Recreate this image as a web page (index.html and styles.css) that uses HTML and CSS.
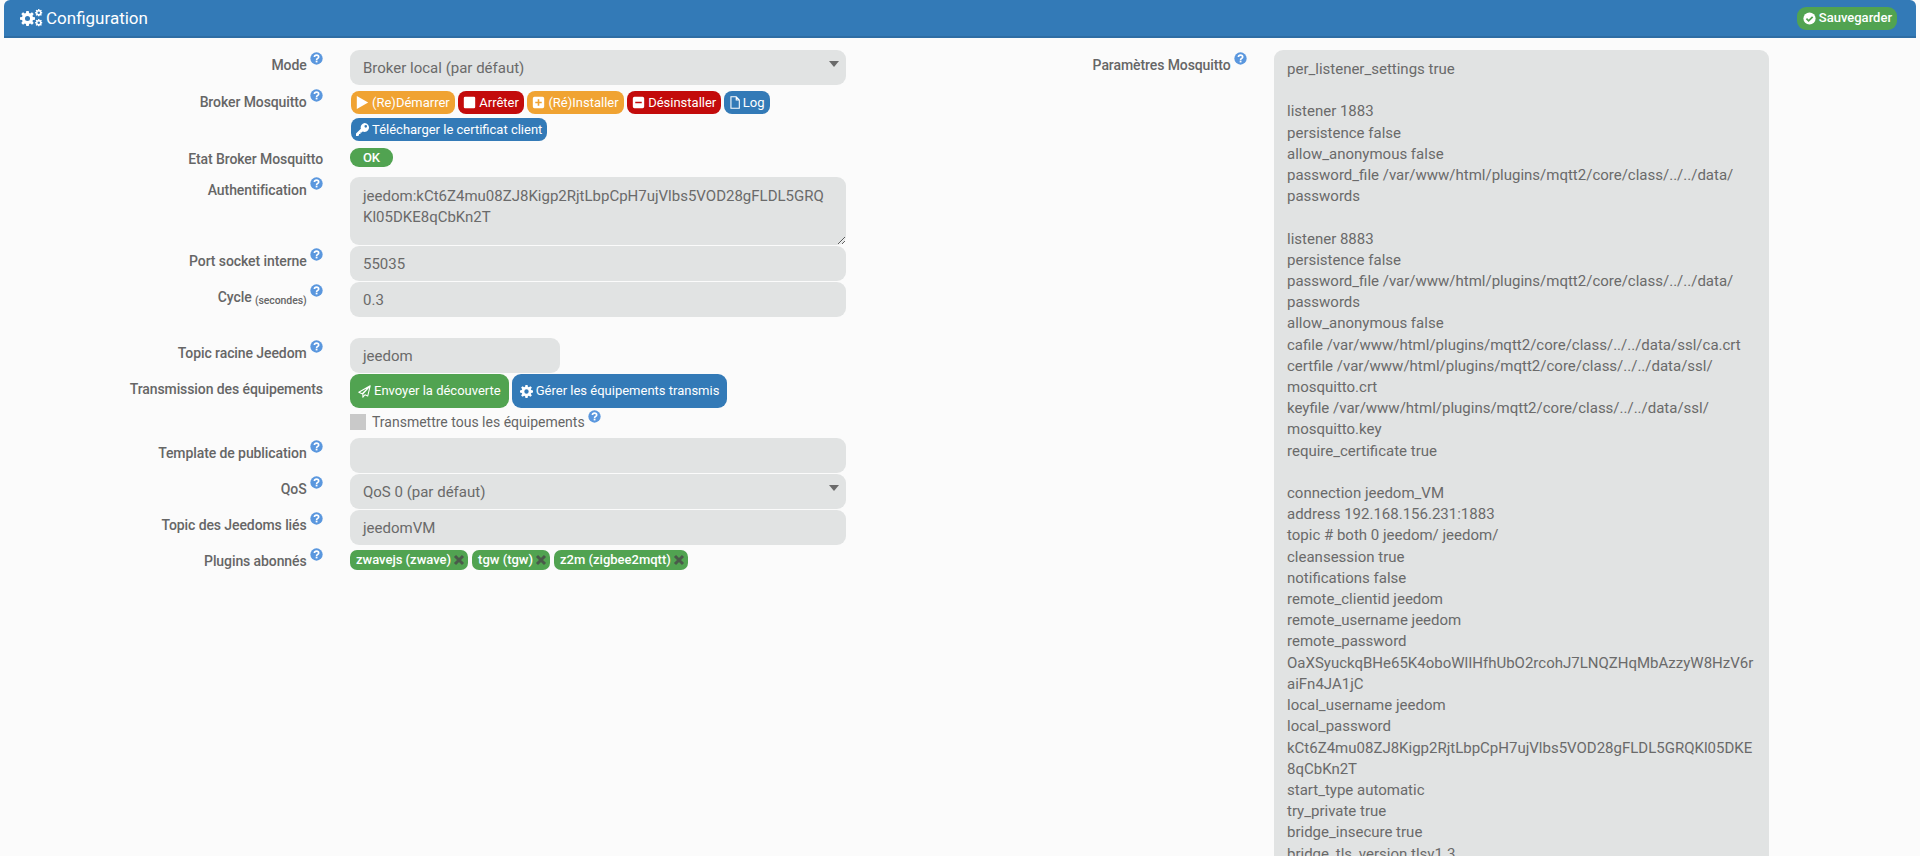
FILE: index.html
```html
<!DOCTYPE html>
<html lang="fr">
<head>
<meta charset="utf-8">
<title>Configuration</title>
<link rel="stylesheet" href="styles.css">
</head>
<body>
<svg class="defs" width="0" height="0" aria-hidden="true">
  <symbol id="q" viewBox="0 0 16 16"><circle cx="8" cy="8" r="7.6" fill="#5a97de"/><path d="M5.400 6.200C5.500 4.600 6.600 3.800 8 3.800c1.500 0 2.700.9 2.700 2.200 0 1.900-2.600 1.900-2.600 3.700" fill="none" stroke="#fff" stroke-width="2"/><rect x="7" y="10.600" width="2.200" height="2.200" fill="#fff"/></symbol>
  <symbol id="cog" viewBox="0 0 16 16"><path fill-rule="evenodd" d="M6.700 0h2.600l.4 2.200 1.200.5L12.800 1.400l1.800 1.800-1.300 1.900.5 1.200 2.200.4v2.600l-2.200.4-.5 1.200 1.300 1.900-1.800 1.800-1.900-1.300-1.200.5-.4 2.200H6.700l-.4-2.200-1.200-.5-1.900 1.300-1.800-1.800 1.300-1.900-.5-1.200L0 9.300V6.700l2.200-.4.5-1.200-1.300-1.900 1.800-1.800 1.900 1.300 1.200-.5zM8 5.300a2.700 2.700 0 1 0 0 5.400 2.700 2.700 0 0 0 0-5.400z"/></symbol>
  <symbol id="check" viewBox="0 0 16 16"><circle cx="8" cy="8" r="7.5"/><path d="M4.200 8.200l2.700 2.700 5-5" fill="none" stroke="#51a351" stroke-width="2.200"/></symbol>
  <symbol id="play" viewBox="0 0 16 16"><path d="M1 0l14 8-14 8z"/></symbol>
  <symbol id="stop" viewBox="0 0 16 16"><rect x="1" y="1" width="14" height="14" rx="1.500"/></symbol>
  <symbol id="plus" viewBox="0 0 16 16"><path fill-rule="evenodd" d="M3 1h10a2 2 0 0 1 2 2v10a2 2 0 0 1-2 2H3a2 2 0 0 1-2-2V3a2 2 0 0 1 2-2zm4 3v3H4v2h3v3h2V9h3V7H9V4z"/></symbol>
  <symbol id="minus" viewBox="0 0 16 16"><path fill-rule="evenodd" d="M3 1h10a2 2 0 0 1 2 2v10a2 2 0 0 1-2 2H3a2 2 0 0 1-2-2V3a2 2 0 0 1 2-2zm1 6v2h8V7z"/></symbol>
  <symbol id="file" viewBox="2 0 12 16"><path d="M3 1h6.500L13.300 5v10H3zM9.500 1v4h3.800" fill="none" stroke="currentColor" stroke-width="1.300"/></symbol>
  <symbol id="key" viewBox="0 0 16 16"><path fill-rule="evenodd" d="M10.500 0a5.500 5.500 0 1 1-2.300 10.500L7 11.700H5.500v1.800H3.700V15L2.500 16H0v-3l6-6A5.500 5.500 0 0 1 10.500 0zm1.500 2.500a1.600 1.600 0 1 0 0 3.200 1.600 1.600 0 0 0 0-3.200z"/></symbol>
  <symbol id="plane" viewBox="0 0 16 16"><path d="M15 1L1 9l4 1.800L15 1zM15 1l-9 10v4l2.600-3 3.400 1.500z" fill="none" stroke="currentColor" stroke-width="1.300" stroke-linejoin="round"/></symbol>
  <symbol id="times" viewBox="0 0 12 12"><path d="M2 2l8 8M10 2l-8 8" stroke="#4a5a4a" stroke-width="3" fill="none"/></symbol>
</svg>

<main class="panel">
  <header class="head">
    <h1 class="title">
      <svg class="cogs" viewBox="0 0 24 20" aria-hidden="true">
        <use href="#cog" x="0" y="3" width="15" height="15"/>
        <use href="#cog" x="15" y="1" width="7.500" height="7.500"/>
        <use href="#cog" x="15" y="11" width="7.500" height="7.500"/>
      </svg>
      Configuration
    </h1>
    <a class="btn save"><svg class="ic"><use href="#check"/></svg>Sauvegarder</a>
  </header>

  <div class="body">
    <form class="col">
      <div class="row">
        <label class="lab">Mode <svg class="q"><use href="#q"/></svg></label>
        <div class="select">Broker local (par défaut)</div>
      </div>
      <div class="row broker">
        <label class="lab">Broker Mosquitto <svg class="q"><use href="#q"/></svg></label>
        <div class="btns">
          <a class="btn orange"><svg class="ic"><use href="#play"/></svg>(Re)Démarrer</a>
          <a class="btn red"><svg class="ic"><use href="#stop"/></svg>Arrêter</a>
          <a class="btn orange"><svg class="ic"><use href="#plus"/></svg>(Ré)Installer</a>
          <a class="btn red"><svg class="ic"><use href="#minus"/></svg>Désinstaller</a>
          <a class="btn blue"><svg class="ic narrow"><use href="#file"/></svg>Log</a>
          <a class="btn blue"><svg class="ic"><use href="#key"/></svg>Télécharger le certificat client</a>
        </div>
      </div>
      <div class="row state">
        <label class="lab">Etat Broker Mosquitto</label>
        <span class="ok">OK</span>
      </div>
      <div class="row auth">
        <label class="lab">Authentification <svg class="q"><use href="#q"/></svg></label>
        <textarea class="input area" readonly>jeedom:kCt6Z4mu08ZJ8Kigp2RjtLbpCpH7ujVlbs5VOD28gFLDL5GRQKl05DKE8qCbKn2T</textarea>
      </div>
      <div class="row port">
        <label class="lab">Port socket interne <svg class="q"><use href="#q"/></svg></label>
        <div class="input">55035</div>
      </div>
      <div class="row">
        <label class="lab">Cycle <small>(secondes)</small> <svg class="q"><use href="#q"/></svg></label>
        <div class="input">0.3</div>
      </div>
      <div class="row topic">
        <label class="lab">Topic racine Jeedom <svg class="q"><use href="#q"/></svg></label>
        <div class="input short">jeedom</div>
      </div>
      <div class="row trans">
        <label class="lab">Transmission des équipements</label>
        <div class="stack">
          <div class="bigbtns">
            <a class="btn big green"><svg class="ic"><use href="#plane"/></svg>Envoyer la découverte</a>
            <a class="btn big blue"><svg class="ic"><use href="#cog"/></svg>Gérer les équipements transmis</a>
          </div>
          <div class="check"><span class="box"></span><span class="checktext">Transmettre tous les équipements <svg class="q"><use href="#q"/></svg></span></div>
        </div>
      </div>
      <div class="row">
        <label class="lab">Template de publication <svg class="q"><use href="#q"/></svg></label>
        <div class="input"></div>
      </div>
      <div class="row">
        <label class="lab">QoS <svg class="q"><use href="#q"/></svg></label>
        <div class="select">QoS 0 (par défaut)</div>
      </div>
      <div class="row">
        <label class="lab">Topic des Jeedoms liés <svg class="q"><use href="#q"/></svg></label>
        <div class="input">jeedomVM</div>
      </div>
      <div class="row plugins">
        <label class="lab">Plugins abonnés <svg class="q"><use href="#q"/></svg></label>
        <div class="tags">
          <span class="tag">zwavejs (zwave)<svg class="x"><use href="#times"/></svg></span>
          <span class="tag">tgw (tgw)<svg class="x"><use href="#times"/></svg></span>
          <span class="tag">z2m (zigbee2mqtt)<svg class="x"><use href="#times"/></svg></span>
        </div>
      </div>
    </form>

    <section class="col right">
      <div class="row">
        <label class="lab rlab">Paramètres Mosquitto <svg class="q"><use href="#q"/></svg></label>
        <div class="conf">per_listener_settings true

listener 1883
persistence false
allow_anonymous false
password_file /var/www/html/plugins/mqtt2/core/class/../../data/<wbr>passwords

listener 8883
persistence false
password_file /var/www/html/plugins/mqtt2/core/class/../../data/<wbr>passwords
allow_anonymous false
cafile /var/www/html/plugins/mqtt2/core/class/../../data/ssl/ca.crt
certfile /var/www/html/plugins/mqtt2/core/class/../../data/ssl/<wbr>mosquitto.crt
keyfile /var/www/html/plugins/mqtt2/core/class/../../data/ssl/<wbr>mosquitto.key
require_certificate true

connection jeedom_VM
address 192.168.156.231:1883
topic # both 0 jeedom/ jeedom/
cleansession true
notifications false
remote_clientid jeedom
remote_username jeedom
remote_password OaXSyuckqBHe65K4oboWlIHfhUbO2rcohJ7LNQZHqMbAzzyW8HzV6raiFn4JA1jC
local_username jeedom
local_password kCt6Z4mu08ZJ8Kigp2RjtLbpCpH7ujVlbs5VOD28gFLDL5GRQKl05DKE8qCbKn2T
start_type automatic
try_private true
bridge_insecure true
bridge_tls_version tlsv1.3</div>
      </div>
    </section>
  </div>
</main>
</body>
</html>
```

FILE: styles.css
```css
* { box-sizing: border-box; }
html, body { height: 856px; margin: 0; overflow: hidden; }
body {
  background: #fbfbfb;
  color: #555;
  font: 14px/20px Roboto, "Liberation Sans", sans-serif;
}
.defs { position: absolute; }
.panel { margin: 0 4px; height: 856px; overflow: hidden; }
.head {
  display: flex;
  align-items: center;
  justify-content: space-between;
  height: 38px;
  padding: 0 19px 0 16px;
  background: #337ab7;
  border-bottom: 2px solid #2e6da4;
  border-radius: 6px 6px 0 0;
}
.title {
  display: flex;
  align-items: center;
  gap: 2px;
  margin: 0;
  color: #fff;
  font-size: 17px;
  font-weight: 400;
}
.cogs { width: 24px; height: 20px; fill: #fff; }
.body { display: flex; padding-top: 12px; }
.col { width: 956px; flex: none; }
.right { width: auto; }
.row { display: flex; margin-top: 1px; }
.col > .row:first-child { margin-top: 0; }
.lab {
  flex: none;
  width: 319px;
  padding-top: 1.500px;
  color: #666;
  font-weight: 500;
  letter-spacing: -0.09px;
  text-align: right;
  white-space: nowrap;
}
.lab small { font-size: 10.500px; font-weight: 500; position: relative; top: 2px; }
.q { display: inline-block; width: 13px; height: 13px; vertical-align: 5px; margin-left: 0; }
.rlab { width: 287px; padding-top: 2px; }
.input, .select {
  flex: none;
  position: relative;
  width: 496px;
  height: 35px;
  margin-left: 27px;
  padding: 8px 13px;
  border: 0;
  border-radius: 9px;
  background: #e1e3e3;
  color: #6a6a6a;
  font: 15px/21px Roboto, sans-serif;
}
.select::after {
  content: "";
  position: absolute;
  right: 7px;
  top: 11px;
  border: 5.500px solid transparent;
  border-top: 6px solid #6a6a6a;
  border-bottom: 0;
}
.short { width: 210px; }
.area { display: block; height: 68px; padding-top: 9px; outline: 0; resize: vertical; overflow: hidden; }
.row.broker { margin-top: 6px; }
.broker .lab { padding-top: 0; margin-top: -2px; }
.btns { display: flex; flex-wrap: wrap; gap: 4px 3px; width: 496px; margin-left: 27.500px; }
.row.state { margin-top: 7px; }
.state .lab { padding-top: 1px; }
.row.auth { margin-top: 8px; }
.auth .lab { padding-top: 0; }
.row.port { margin-top: 1px; }
.row.topic { margin-top: 21px; }
.btn {
  display: inline-flex;
  align-items: center;
  gap: 3px;
  height: 23px;
  padding: 0 5px 0 5.500px;
  border-radius: 8px;
  color: #fff;
  font-size: 13px;
  font-weight: 400;
  white-space: nowrap;
}
.ic { width: 13px; height: 13px; fill: #fff; flex: none; color: #fff; }
.ic.narrow { width: 10px; }
.orange { background: #f0a332; }
.red { background: #c30b0b; }
.blue { background: #337ab7; }
.green, .save { background: #51a351; }
.save { height: 23px; border-radius: 9px; font-weight: 500; }
.ok {
  margin-left: 27px;
  width: 43px;
  height: 19px;
  border-radius: 9px;
  background: #51a351;
  color: #fff;
  font-size: 13px;
  font-weight: 500;
  line-height: 19px;
  text-align: center;
}
.trans .lab { padding-top: 5px; }
.stack { margin-left: 27px; width: 496px; }
.bigbtns { display: flex; gap: 3px; }
.big { height: 34px; padding: 0 8px; border-radius: 9px; }
.check { display: flex; align-items: flex-start; height: 24px; margin-top: 5px; color: #666; line-height: 18px; white-space: pre; font-size: 14px; }
.checktext { margin-top: -3px; }
.check .q { vertical-align: 4px; }
.box { width: 16px; height: 16px; margin: 1px 6px 0 0; background: #c9c9c9; }
.row.plugins { margin-top: 1px; }
.plugins .lab { padding-top: 1.500px; }
.tags { display: flex; gap: 4px; margin-left: 27px; margin-top: 4px; }
.tag {
  display: inline-flex;
  align-items: center;
  height: 20px;
  padding: 0 3px 0 6px;
  border-radius: 7px;
  background: #51a351;
  color: #fff;
  font-size: 13px;
  font-weight: 500;
}
.x { width: 12px; height: 12px; margin-left: 2px; }
.conf {
  width: 495px;
  height: 900px;
  margin-left: 27px;
  padding: 9px 13px;
  border-radius: 9px 9px 0 0;
  background: #e1e3e3;
  color: #6a6a6a;
  font: 15px/21.2px Roboto, sans-serif;
  white-space: pre-wrap;
  overflow-wrap: anywhere;
}
```
